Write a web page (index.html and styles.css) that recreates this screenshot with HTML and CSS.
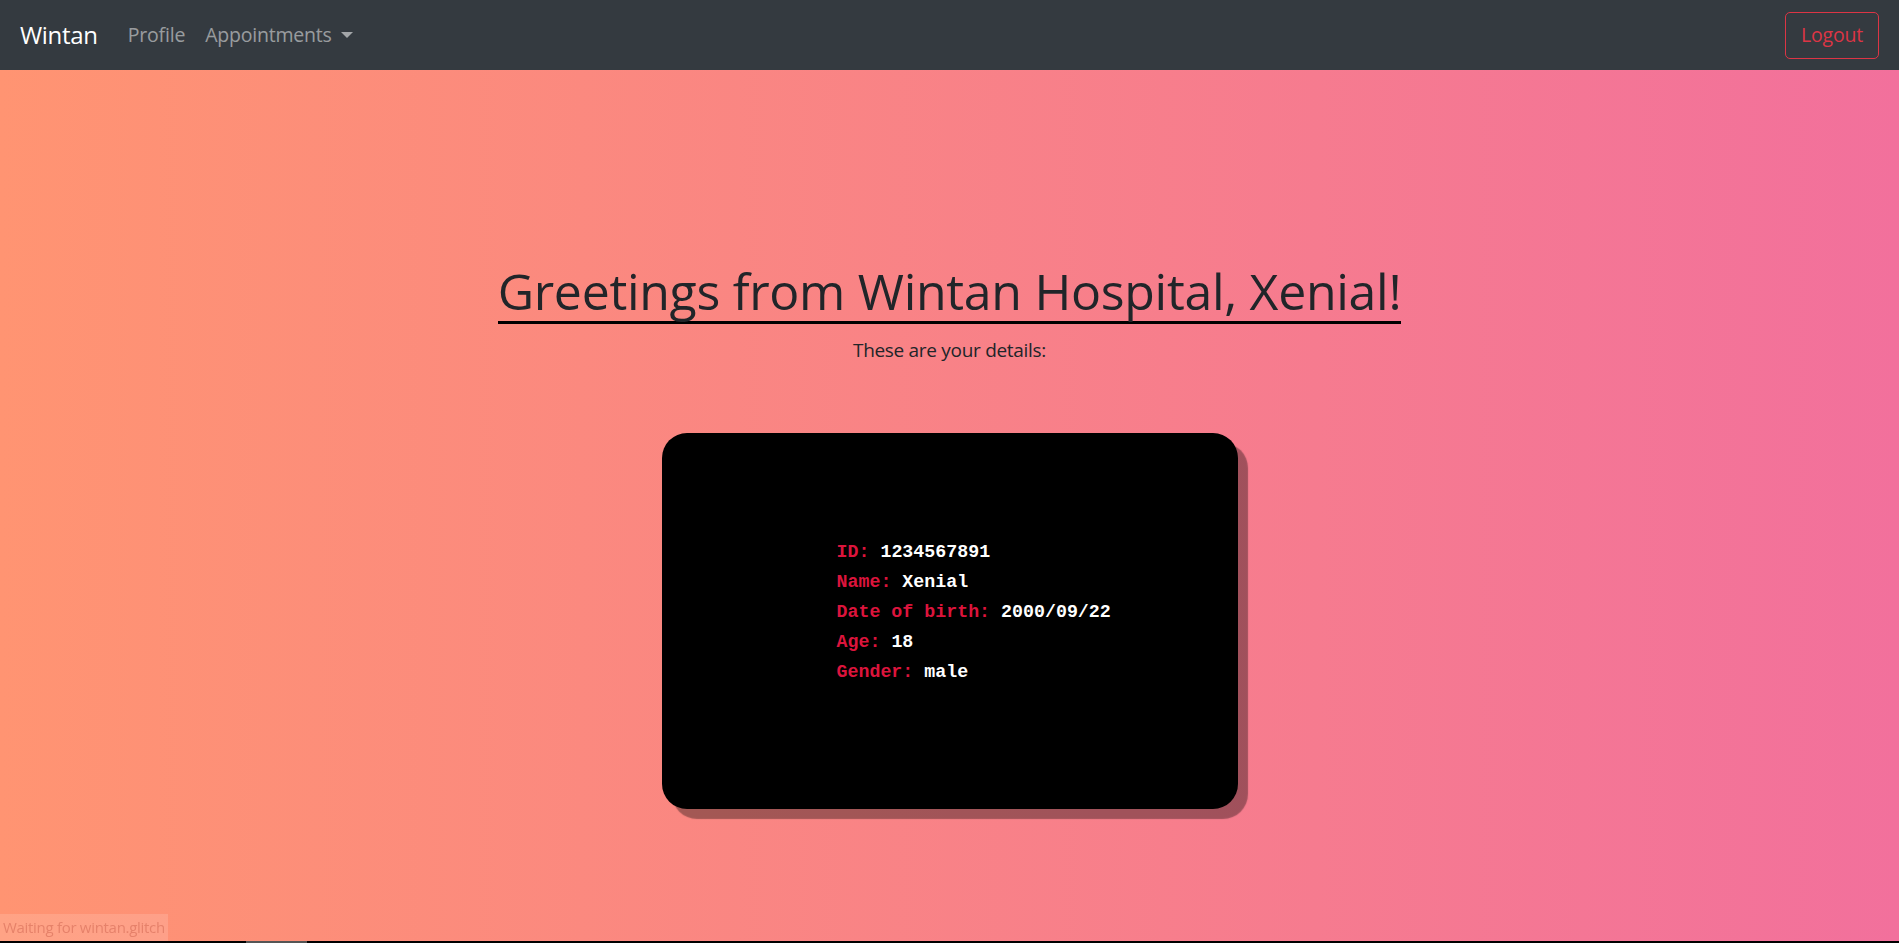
FILE: index.html
```html
<!DOCTYPE html>
<html lang="en">
<head>
<meta charset="utf-8">
<title>Wintan</title>
<link rel="stylesheet" href="styles.css">
</head>
<body>
<nav class="navbar">
  <a class="brand" href="#">Wintan</a>
  <ul class="nav">
    <li><a class="nav-link" href="#">Profile</a></li>
    <li><a class="nav-link dropdown" href="#">Appointments<span class="caret"></span></a></li>
  </ul>
  <button class="btn-logout" type="button">Logout</button>
</nav>
<main class="main">
  <h1 class="title">Greetings from Wintan Hospital, Xenial!</h1>
  <p class="subtitle">These are your details:</p>
  <div class="card">
    <div class="details">
      <div class="row"><span class="label">ID:</span> <span class="value">1234567891</span></div>
      <div class="row"><span class="label">Name:</span> <span class="value">Xenial</span></div>
      <div class="row"><span class="label">Date of birth:</span> <span class="value">2000/09/22</span></div>
      <div class="row"><span class="label">Age:</span> <span class="value">18</span></div>
      <div class="row"><span class="label">Gender:</span> <span class="value">male</span></div>
    </div>
  </div>
</main>
<div class="status">Waiting for wintan.glitch</div>
<div class="bottom-bar"><span class="bottom-thumb"></span></div>
</body>
</html>
```
FILE: styles.css
```css
* { box-sizing: border-box; }
html, body { height: 100%; }
body {
  margin: 0;
  font-family: "Open Sans", "Noto Sans", sans-serif;
  font-size: 20px;
  line-height: 1.5;
  color: #212529;
  background: linear-gradient(to right, #ff9472, #f2709c);
  overflow: hidden;
}
.navbar {
  height: 70px;
  background: #343a40;
  display: flex;
  align-items: center;
  padding: 0 20px;
}
.brand {
  color: #fff;
  text-decoration: none;
  font-size: 24px;
  margin-right: 20px;
  letter-spacing: -0.3px;
}
.nav {
  list-style: none;
  display: flex;
  margin: 0;
  padding: 0;
  flex: 1;
}
.nav-link {
  display: flex;
  align-items: center;
  color: rgba(255,255,255,0.5);
  text-decoration: none;
  padding: 10px 10px;
  font-size: 19.5px;
  letter-spacing: -0.2px;
}
.caret {
  display: inline-block;
  margin-left: 9px;
  width: 0;
  height: 0;
  border-top: 6px solid rgba(255,255,255,0.55);
  border-left: 6px solid transparent;
  border-right: 6px solid transparent;
}
.btn-logout {
  font-family: inherit;
  font-size: 19.5px;
  line-height: 30px;
  color: #dc3545;
  background: transparent;
  border: 1px solid #dc3545;
  border-radius: 5px;
  padding: 7px 15px;
  height: 47px;
  letter-spacing: -0.2px;
}
.main {
  display: flex;
  flex-direction: column;
  align-items: center;
  padding-top: 191px;
}
.title {
  margin: 0;
  font-size: 50px;
  font-weight: 400;
  line-height: 60px;
  letter-spacing: -0.3px;
  border-bottom: 3px solid #000;
}
.subtitle {
  margin: 11px 0 0;
  font-size: 19px;
  line-height: 30px;
  letter-spacing: -0.3px;
}
.card {
  margin-top: 68px;
  width: 576px;
  height: 376px;
  background: #000;
  border-radius: 25px;
  box-shadow: 10px 10px 1px rgba(0,0,0,0.35);
  padding: 104px 0 0 175px;
}
.details {
  font-family: "Liberation Mono", "DejaVu Sans Mono", monospace;
  font-weight: bold;
  font-size: 18.3px;
  line-height: 30px;
}
.label { color: #dc143c; }
.value { color: #fff; }
.status {
  position: fixed;
  left: 0;
  bottom: 2px;
  height: 27px;
  padding: 0 3px;
  font-size: 15px;
  line-height: 27px;
  color: rgba(200,90,70,0.45);
  background: rgba(255,255,255,0.14);
  letter-spacing: -0.3px;
}
.bottom-bar {
  position: fixed;
  left: 0;
  right: 0;
  bottom: 0;
  height: 2px;
  background: #000;
}
.bottom-thumb {
  position: absolute;
  left: 246px;
  width: 61px;
  top: 0;
  height: 2px;
  background: #555;
}
```
